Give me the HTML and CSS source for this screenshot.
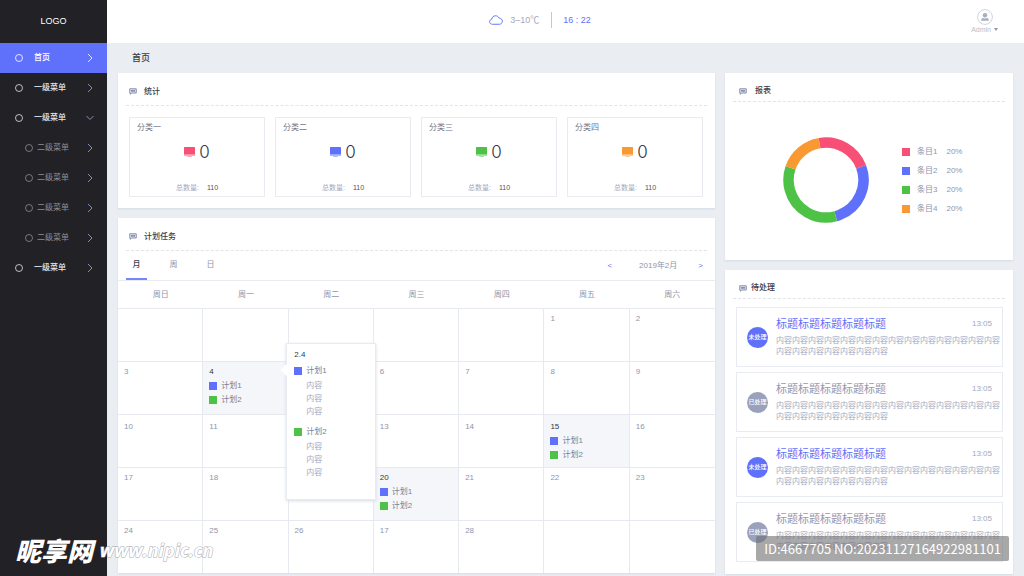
FILE: index.html
```html
<!DOCTYPE html>
<html lang="zh-CN">
<head>
<meta charset="utf-8">
<title>首页</title>
<link rel="stylesheet" href="styles.css">
</head>
<body>
<svg class="defs" width="0" height="0" aria-hidden="true">
  <symbol id="chat" viewBox="0 0 16 14"><path d="M1.5 1.5h13v8.5h-9l-3 2.5v-2.5h-1z" fill="#dfe3f2" stroke="#6f789c" stroke-width="1.6"/><path d="M4 5.8h8" stroke="#59628a" stroke-width="2.2"/></symbol>
  <symbol id="screen" viewBox="0 0 22 20"><path d="M1 0h20q1 0 1 1v14H0V1q0-1 1-1z"/><path d="M0 15h22v2q0 1-1 1h-6l1 2H6l1-2H1q-1 0-1-1z" opacity=".5"/></symbol>
  <symbol id="right" viewBox="0 0 6 10"><path d="M1 1l4 4-4 4" fill="none" stroke="currentColor"/></symbol>
  <symbol id="down" viewBox="0 0 8 6"><path d="M0.500 1L4 4.500 7.500 1" fill="none" stroke="currentColor"/></symbol>
</svg>
<div class="app">
  <aside class="sidebar">
    <div class="logo">LOGO</div>
    <nav class="menu">
      <a class="item active" href="#"><svg class="dot" viewBox="0 0 8 8"><circle cx="4" cy="4" r="3.500"/></svg><span>首页</span><svg class="chev"><use href="#right"/></svg></a>
      <a class="item" href="#"><svg class="dot" viewBox="0 0 8 8"><circle cx="4" cy="4" r="3.500"/></svg><span>一级菜单</span><svg class="chev"><use href="#right"/></svg></a>
      <a class="item" href="#"><svg class="dot" viewBox="0 0 8 8"><circle cx="4" cy="4" r="3.500"/></svg><span>一级菜单</span><svg class="chev"><use href="#down"/></svg></a>
      <a class="item sub" href="#"><svg class="dot" viewBox="0 0 8 8"><circle cx="4" cy="4" r="3.500"/></svg><span>二级菜单</span><svg class="chev"><use href="#right"/></svg></a>
      <a class="item sub" href="#"><svg class="dot" viewBox="0 0 8 8"><circle cx="4" cy="4" r="3.500"/></svg><span>二级菜单</span><svg class="chev"><use href="#right"/></svg></a>
      <a class="item sub" href="#"><svg class="dot" viewBox="0 0 8 8"><circle cx="4" cy="4" r="3.500"/></svg><span>二级菜单</span><svg class="chev"><use href="#right"/></svg></a>
      <a class="item sub" href="#"><svg class="dot" viewBox="0 0 8 8"><circle cx="4" cy="4" r="3.500"/></svg><span>二级菜单</span><svg class="chev"><use href="#right"/></svg></a>
      <a class="item" href="#"><svg class="dot" viewBox="0 0 8 8"><circle cx="4" cy="4" r="3.500"/></svg><span>一级菜单</span><svg class="chev"><use href="#right"/></svg></a>
    </nav>
  </aside>
  <div class="page">
    <header class="topbar">
      <div class="weather">
        <svg class="cloud" viewBox="0 0 28 20"><path d="M7 18.500C3.500 18.500 1.200 16.500 1.200 13.500 1.200 11 3 9 5.500 8.500 6 4.500 9 1.500 13 1.500c3.200 0 5.800 1.800 7 4.500 3.800.4 6.700 2.900 6.700 6.500 0 3.500-2.700 6-6.200 6z" fill="none" stroke="#6678f5" stroke-width="2"/></svg>
        <span class="temp">3–10℃</span>
        <time class="clock">16 : 22</time>
      </div>
      <button class="user" type="button">
        <svg class="avatar" viewBox="0 0 32 32"><circle cx="16" cy="16" r="14.800" fill="#fff" stroke="#c3c8d3" stroke-width="1.600"/><circle cx="16" cy="12.500" r="4.500" fill="#a8b0bf"/><path d="M8.500 23.500v-2q0-3 3.500-3.500l4 1 4-1q3.500.5 3.500 3.500v2z" fill="#a8b0bf"/></svg>
        <span class="name">Admin <i class="caret"></i></span>
      </button>
    </header>
    <main class="main">
      <h1 class="page-title">首页</h1>
      <div class="columns">
        <div class="column">
          <section class="panel">
            <h2 class="head"><svg class="chat"><use href="#chat"/></svg>统计</h2>
            <div class="stats">
              <article class="stat"><h3>分类一</h3><p class="value"><svg class="screen red"><use href="#screen"/></svg>0</p><p class="total">总数量: <b>110</b></p></article>
              <article class="stat"><h3>分类二</h3><p class="value"><svg class="screen blue"><use href="#screen"/></svg>0</p><p class="total">总数量: <b>110</b></p></article>
              <article class="stat"><h3>分类三</h3><p class="value"><svg class="screen green"><use href="#screen"/></svg>0</p><p class="total">总数量: <b>110</b></p></article>
              <article class="stat"><h3>分类四</h3><p class="value"><svg class="screen orange"><use href="#screen"/></svg>0</p><p class="total">总数量: <b>110</b></p></article>
            </div>
          </section>
          <section class="panel">
            <h2 class="head"><svg class="chat"><use href="#chat"/></svg>计划任务</h2>
            <div class="toolbar">
              <button class="tab on" type="button">月</button>
              <button class="tab" type="button">周</button>
              <button class="tab" type="button">日</button>
              <div class="pager"><button type="button" aria-label="上个月">&lt;</button><span>2019年2月</span><button type="button" aria-label="下个月">&gt;</button></div>
            </div>
            <table class="calendar">
              <thead><tr><th>周日</th><th>周一</th><th>周二</th><th>周三</th><th>周四</th><th>周五</th><th>周六</th></tr></thead>
              <tbody>
                <tr><td></td><td></td><td></td><td></td><td></td><td>1</td><td>2</td></tr>
                <tr><td>3</td>
                  <td class="busy"><b>4</b><p class="plan blue">计划1</p><p class="plan green">计划2</p>
                    <div class="popover">
                      <b>2.4</b>
                      <p class="plan blue">计划1</p>
                      <ul><li>内容</li><li>内容</li><li>内容</li></ul>
                      <p class="plan green">计划2</p>
                      <ul><li>内容</li><li>内容</li><li>内容</li></ul>
                    </div>
                  </td>
                  <td></td><td>6</td><td>7</td><td>8</td><td>9</td></tr>
                <tr class="low"><td>10</td><td>11</td><td></td><td>13</td><td>14</td><td class="busy"><b>15</b><p class="plan blue">计划1</p><p class="plan green">计划2</p></td><td>16</td></tr>
                <tr><td>17</td><td>18</td><td></td><td class="busy"><b>20</b><p class="plan blue">计划1</p><p class="plan green">计划2</p></td><td>21</td><td>22</td><td>23</td></tr>
                <tr><td>24</td><td>25</td><td>26</td><td>17</td><td>28</td><td></td><td></td></tr>
              </tbody>
            </table>
          </section>
        </div>
        <div class="column">
          <section class="panel">
            <h2 class="head side wide"><svg class="chat"><use href="#chat"/></svg>报表</h2>
            <div class="report">
              <svg class="donut" viewBox="0 0 86 86" role="img" aria-label="报表">
                <g fill="none" stroke-width="10.500">
                  <circle cx="43" cy="43" r="37.500" pathLength="360" stroke="#f74f75" stroke-dasharray="79.500 280.500" transform="rotate(-100 43 43)"/>
                  <circle cx="43" cy="43" r="37.500" pathLength="360" stroke="#5f71fb" stroke-dasharray="95.500 264.500" transform="rotate(-20.500 43 43)"/>
                  <circle cx="43" cy="43" r="37.500" pathLength="360" stroke="#4dc247" stroke-dasharray="124 236" transform="rotate(75 43 43)"/>
                  <circle cx="43" cy="43" r="37.500" pathLength="360" stroke="#f89932" stroke-dasharray="61 299" transform="rotate(199 43 43)"/>
                </g>
              </svg>
              <ul class="legend">
                <li class="red">条目1<span>20%</span></li>
                <li class="blue">条目2<span>20%</span></li>
                <li class="green">条目3<span>20%</span></li>
                <li class="orange">条目4<span>20%</span></li>
              </ul>
            </div>
          </section>
          <section class="panel grow">
            <h2 class="head side"><svg class="chat"><use href="#chat"/></svg>待处理</h2>
            <div class="todos">
              <article class="todo open"><span class="badge">未处理</span><div class="text"><div class="line"><h3>标题标题标题标题标题</h3><time>13:05</time></div><p>内容内容内容内容内容内容内容内容内容内容内容内容内容内容内容内容内容内容内容内容内容</p></div></article>
              <article class="todo"><span class="badge">已处理</span><div class="text"><div class="line"><h3>标题标题标题标题标题</h3><time>13:05</time></div><p>内容内容内容内容内容内容内容内容内容内容内容内容内容内容内容内容内容内容内容内容内容</p></div></article>
              <article class="todo open"><span class="badge">未处理</span><div class="text"><div class="line"><h3>标题标题标题标题标题</h3><time>13:05</time></div><p>内容内容内容内容内容内容内容内容内容内容内容内容内容内容内容内容内容内容内容内容内容</p></div></article>
              <article class="todo"><span class="badge">已处理</span><div class="text"><div class="line"><h3>标题标题标题标题标题</h3><time>13:05</time></div><p>内容内容内容内容内容内容内容内容内容内容内容内容内容内容内容内容内容内容内容内容内容</p></div></article>
            </div>
          </section>
        </div>
      </div>
    </main>
  </div>
</div>
<div class="mark"><strong>昵享网</strong><span>www.nipic.cn</span></div>
<div class="stamp">ID:4667705 NO:20231127164922981101</div>
</body>
</html>
```
FILE: styles.css
```css
* { box-sizing: border-box; margin: 0; padding: 0; }
body {
  position: relative;
  font: 8px/10px "Liberation Sans", "Noto Sans CJK SC", sans-serif;
  color: #8f95ab;
  background: #eaeef3;
}
button { border: 0; background: none; font: inherit; color: inherit; cursor: pointer; }
a { color: inherit; text-decoration: none; }
ul { list-style: none; }
i { font-style: normal; }
table { border-spacing: 0; }
.defs { position: absolute; }
.app { display: flex; min-height: 100vh; }

/* Sidebar */
.sidebar { flex: 0 0 107px; background: #222126; color: #e6e6ea; }
.logo { padding: 16px 0; text-align: center; font-size: 9px; line-height: 11px; color: #fff; }
.item { display: flex; align-items: center; height: 30px; padding: 0 13px 1px 15px; font-weight: 500; }
.item.active { background: #5f71fb; color: #fff; }
.dot { width: 8px; height: 8px; margin-right: 11px; fill: none; stroke: currentColor; stroke-width: 0.8; }
.sub { padding-left: 25px; color: #8d8d93; font-weight: 400; }
.sub .dot { margin-right: 4px; }
.chev { width: 8px; height: 10px; margin-left: auto; color: #8390b5; }
.active .chev { color: #dfe3ff; }

/* Top bar */
.page { flex: 1; min-width: 0; display: flex; flex-direction: column; }
.topbar { display: grid; grid-template-columns: 1fr auto 1fr; height: 43px; padding: 0 26px 0 24px; background: #fff; }
.weather { grid-column: 2; display: flex; align-items: center; padding: 0 49px 3px 0; font-size: 9px; }
.cloud { width: 14px; height: 10px; margin-right: 7px; }
.temp { padding-right: 12px; color: #a3a9bb; line-height: 16px; border-right: 1px solid #c3c8d8; }
.clock { padding-left: 11px; color: #5f71fb; }
.user { justify-self: end; display: flex; flex-direction: column; align-items: center; padding-top: 9px; font-size: 7px; line-height: 9px; color: #b9bdc9; }
.avatar { width: 16px; height: 16px; }
.name { display: flex; align-items: center; gap: 3px; }
.caret { border: 2px solid transparent; border-top: 3px solid #9096a6; border-bottom: 0; }

/* Panels */
.main { flex: 1; display: flex; flex-direction: column; padding: 0 11px 2px; }
.page-title { padding: 9px 14px; font-size: 9px; line-height: 12px; font-weight: 500; color: #3a3b46; }
.columns { flex: 1; display: grid; grid-template-columns: 597fr 288fr; gap: 10px; }
.column { display: flex; flex-direction: column; gap: 10px; min-width: 0; }
.panel { background: #fff; box-shadow: 0 1px 2px #d5dae4; }
.grow { flex: 1; }
.head { display: flex; align-items: center; gap: 7px; height: 33px; margin: 0 8px; padding: 5px 3px 0; border-bottom: 1px dashed #e1e4ea; font-size: 8px; font-weight: 500; color: #3a3b46; }
.head.side { height: 29px; padding: 8px 6px 0; gap: 4px; }
.head.wide { gap: 8px; }
.chat { width: 8px; height: 7px; }
.red { --c: #f74f75; }
.blue { --c: #5f71fb; }
.green { --c: #4dc247; }
.orange { --c: #f89932; }

/* Statistics */
.stats { display: grid; grid-template-columns: repeat(4, 1fr); gap: 10px; padding: 11px 12px 11px 11px; }
.stat { display: flex; flex-direction: column; height: 80px; padding: 5px 7px 3px; border: 1px solid #e8ebf0; }
.stat h3 { font-size: 8px; font-weight: 400; color: #707489; }
.value { flex: 1; display: flex; align-items: center; justify-content: center; gap: 4px; padding-bottom: 12px; font: 300 17px/20px Inter, sans-serif; color: #34363f; }
.screen { width: 11px; height: 10px; fill: var(--c); }
.total { display: flex; justify-content: center; gap: 8px; font-size: 7px; color: #a3a9c2; }
.total b { font-weight: 400; color: #4e5162; }

/* Calendar */
.toolbar { display: flex; height: 30px; padding: 0 8px; border-bottom: 1px solid #e8ebf0; }
.tab { width: 21px; margin-right: 16px; padding-top: 1px; border-bottom: 2px solid transparent; }
.tab.on { color: #3a3b46; border-color: #7886fa; font-weight: 500; }
.pager { display: flex; align-items: center; gap: 27px; margin-left: auto; padding-right: 4px; }
.pager button { color: #5f71fb; }
.pager button:last-child { margin-left: -6px; }
.calendar { width: 100%; table-layout: fixed; }
.calendar th { height: 27px; padding-top: 1px; font-weight: 400; }
.calendar td { position: relative; height: 53px; padding: 5px 6px 0; vertical-align: top; border-top: 1px solid #e6e9f0; border-right: 1px solid #e6e9f0; }
.calendar td:last-child { border-right: 0; }
.calendar .low td { padding-top: 7px; }
.calendar .busy { background: #f4f6fa; }
.calendar b { font-weight: 400; color: #34363f; }
.plan { display: flex; align-items: center; gap: 4px; margin-top: 4px; color: #7c8092; }
.plan::before { content: ""; width: 8px; height: 8px; background: var(--c); }
.popover { position: absolute; z-index: 1; top: -19px; left: 83px; width: 90px; padding: 6px 7px 17px; background: #fff; border: 1px solid #e8ebf1; box-shadow: 0 1px 3px #d5dae4; }
.popover::before { content: ""; position: absolute; top: 22px; left: -5px; width: 8px; height: 8px; background: #fff; transform: rotate(45deg); }
.popover .plan { margin-top: 6px; }
.popover ul { padding: 3px 0 3px 12px; line-height: 13px; color: #a3a9bf; }

/* Report */
.report { display: flex; align-items: center; padding: 35px 50px 37px 58px; }
.donut { width: 86px; height: 86px; margin-right: 33px; }
.legend { display: grid; gap: 9px; padding-top: 1px; }
.legend li { display: flex; align-items: center; }
.legend li::before { content: ""; width: 8px; height: 8px; margin-right: 7px; background: var(--c); }
.legend span { margin-left: 9px; }

/* To-do list */
.todos { display: grid; gap: 5px; padding: 8px 10px 9px 11px; }
.todo { display: flex; align-items: center; gap: 8px; min-height: 60px; padding: 0 1px 0 10px; border: 1px solid #e8ebf2; }
.badge { flex: none; width: 21px; border-radius: 50%; background: #99a1bd; color: #fff; font-size: 6px; font-weight: 500; line-height: 21px; text-align: center; }
.open .badge { background: #5f71fb; }
.text { flex: 1; min-width: 0; padding-bottom: 1px; }
.line { display: flex; align-items: center; justify-content: space-between; padding-right: 9px; color: #a3a9bb; }
.line h3 { font-size: 11px; line-height: 16px; font-weight: 400; color: #9299b3; }
.open h3 { color: #5f71fb; }
.text p { margin-top: 3px; line-height: 11px; color: #a3a9bf; }

/* Watermarks over the page */
.mark { position: absolute; left: 15px; bottom: 11px; display: flex; align-items: center; gap: 7px; color: #fff; }
.mark strong { font: italic 900 26px/30px "Noto Sans CJK SC", sans-serif; }
.mark span { font: italic 700 18px/30px "Open Sans", sans-serif; -webkit-text-stroke: 1px #a5a7ad; paint-order: stroke fill; }
.stamp { position: absolute; right: 15px; bottom: 15px; padding: 0 8px; border-radius: 2px; background: rgba(110, 110, 112, 0.6); color: #fff; font: 13px/25px "Noto Sans CJK SC", sans-serif; }
```
